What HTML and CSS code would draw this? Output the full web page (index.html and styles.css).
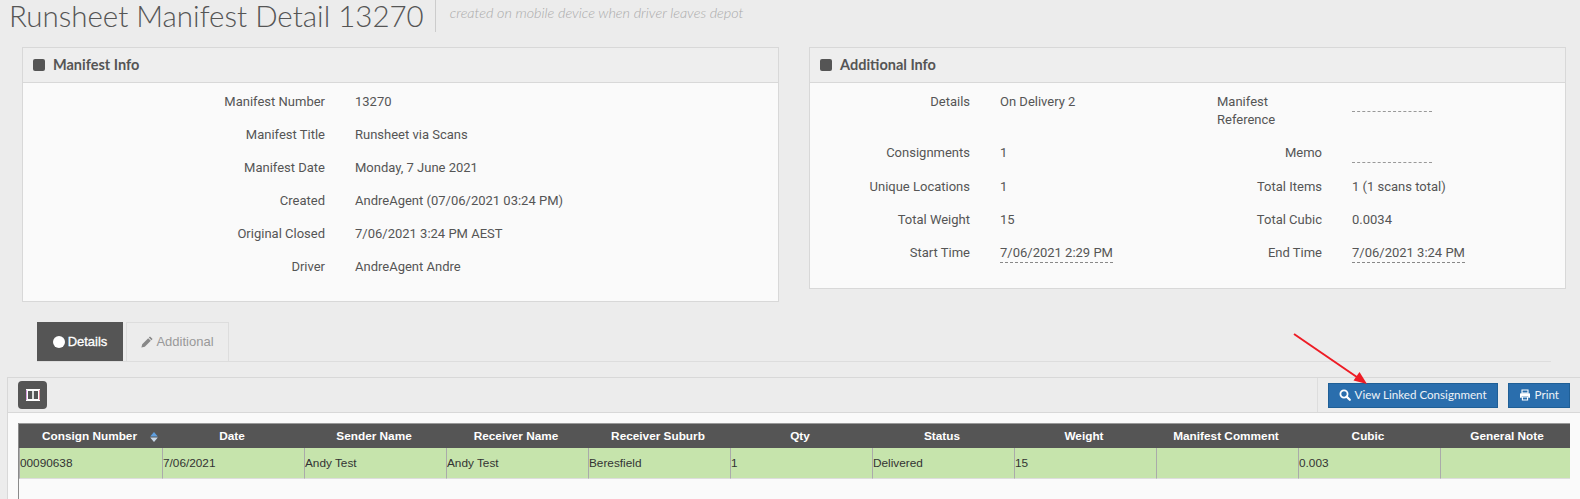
FILE: index.html
```html
<!DOCTYPE html>
<html lang="en">
<head>
<meta charset="utf-8">
<title>Runsheet Manifest Detail 13270</title>
<link rel="stylesheet" href="styles.css">
</head>
<body>
<header class="page-head">
  <h1 class="page-title">Runsheet Manifest Detail 13270</h1>
  <p class="page-sub">created on mobile device when driver leaves depot</p>
</header>

<div class="panels">
  <section class="panel panel-left">
    <h2 class="panel-head"><span class="panel-icon"></span>Manifest Info</h2>
    <div class="panel-body info-one">
      <span class="lab">Manifest Number</span><span class="val">13270</span>
      <span class="lab">Manifest Title</span><span class="val">Runsheet via Scans</span>
      <span class="lab">Manifest Date</span><span class="val">Monday, 7 June 2021</span>
      <span class="lab">Created</span><span class="val">AndreAgent (07/06/2021 03:24 PM)</span>
      <span class="lab">Original Closed</span><span class="val">7/06/2021 3:24 PM AEST</span>
      <span class="lab">Driver</span><span class="val">AndreAgent Andre</span>
    </div>
  </section>
  <section class="panel panel-right">
    <h2 class="panel-head"><span class="panel-icon"></span>Additional Info</h2>
    <div class="panel-body info-two">
      <span class="lab">Details</span><span class="val">On Delivery 2</span>
      <span class="lab lab-left">Manifest Reference</span><span class="val"><span class="dash-empty"></span></span>
      <span class="lab">Consignments</span><span class="val">1</span>
      <span class="lab">Memo</span><span class="val"><span class="dash-empty"></span></span>
      <span class="lab">Unique Locations</span><span class="val">1</span>
      <span class="lab">Total Items</span><span class="val">1 (1 scans total)</span>
      <span class="lab">Total Weight</span><span class="val">15</span>
      <span class="lab">Total Cubic</span><span class="val">0.0034</span>
      <span class="lab">Start Time</span><span class="val"><span class="dash">7/06/2021 2:29 PM</span></span>
      <span class="lab">End Time</span><span class="val"><span class="dash">7/06/2021 3:24 PM</span></span>
    </div>
  </section>
</div>

<nav class="tabs">
  <a class="tab tab-active"><span class="tab-dot"></span>Details</a>
  <a class="tab"><svg class="tab-pencil" viewBox="0 0 12 12"><path d="M9 .4l2.600 2.600-1.200 1.200-2.600-2.600zM7.200 2.200l2.600 2.600-6 6L.4 11.600l.8-3.400z" fill="#888"/></svg>Additional</a>
</nav>

<div class="toolbar">
  <button class="col-btn" aria-label="Columns"><svg viewBox="0 0 14 12" class="col-icon"><rect x="1" y="1" width="12" height="10" fill="none" stroke="#fff" stroke-width="2"/><path d="M7 1v10" stroke="#fff" stroke-width="1.6"/><path d="M0.5 1v10" stroke="#d8a0e0" stroke-width="1"/><path d="M13.5 1v10" stroke="#e090a0" stroke-width="1"/></svg></button>
  <div class="toolbar-right">
    <button class="btn"><svg class="btn-icon" viewBox="0 0 12 12"><circle cx="5" cy="5" r="3.6" fill="none" stroke="#fff" stroke-width="1.8"/><path d="M7.6 7.6l3.2 3.2" stroke="#fff" stroke-width="2.2" stroke-linecap="round"/></svg>View Linked Consignment</button>
    <button class="btn"><svg class="btn-icon" viewBox="0 0 12 12"><path d="M3 1h6v3H3z" fill="none" stroke="#fff" stroke-width="1.1"/><path d="M1 5.3c0-.7.4-1 1-1h8c.6 0 1 .3 1 1v3.4H9.2V7.2H2.8v1.5H1z" fill="#fff"/><path d="M3.4 8h5.2v3H3.4z" fill="none" stroke="#fff" stroke-width="1.1"/></svg>Print</button>
  </div>
</div>

<div class="grid-area">
  <div class="grid-clip">
    <table class="grid">
      <thead>
        <tr>
          <th class="th-sorted">Consign Number<svg class="sort" viewBox="0 0 8 10"><path d="M4 0l3.800 4.500H.2z" fill="#5f9fe0"/><path d="M4 10L.2 5.500h7.600z" fill="#c9d8e8"/></svg></th>
          <th>Date</th><th>Sender Name</th><th>Receiver Name</th><th>Receiver Suburb</th><th>Qty</th><th>Status</th><th>Weight</th><th>Manifest Comment</th><th>Cubic</th><th class="th-last">General Note</th>
        </tr>
      </thead>
      <tbody>
        <tr>
          <td>00090638</td><td>7/06/2021</td><td>Andy Test</td><td>Andy Test</td><td>Beresfield</td><td>1</td><td>Delivered</td><td>15</td><td></td><td>0.003</td><td></td>
        </tr>
      </tbody>
    </table>
  </div>
</div>

<svg class="arrow" viewBox="0 0 80 56" aria-hidden="true"><path d="M1 1L66 45.500" stroke="#ee1c25" stroke-width="2"/><path d="M74 51L60.500 47.500 66.500 39z" fill="#ee1c25"/></svg>
</body>
</html>
```

FILE: styles.css
```css
* { box-sizing: border-box; }
html, body { height: 499px; overflow: hidden; }
body {
  margin: 0;
  background: #ececec;
  color: #555;
  font: 13px/18px Roboto, "Liberation Sans", sans-serif;
  position: relative;
}
.page-head {
  display: flex;
  height: 47px;
  padding-left: 9px;
  align-items: flex-start;
}
.page-title {
  margin: 0;
  height: 32px;
  padding-right: 11px;
  border-right: 1px solid #ccc;
  font: 300 29.5px/32px Lato, sans-serif;
  color: #555;
  white-space: nowrap;
}
.page-sub {
  margin: 4px 0 0 14px;
  font: italic 300 14.4px/18px Lato, sans-serif;
  color: #aaa;
}
.panels {
  display: flex;
  align-items: flex-start;
  gap: 30px;
  padding-left: 22px;
}
.panel {
  border: 1px solid #d8d8d8;
  background: #fafafa;
}
.panel-left { width: 757px; height: 255px; }
.panel-right { width: 757px; height: 242px; }
.panel-head {
  display: flex;
  align-items: center;
  gap: 8px;
  height: 35px;
  margin: 0;
  padding-left: 10px;
  background: #eee;
  border-bottom: 1px solid #d8d8d8;
  font: 700 14.5px/18px Lato, sans-serif;
  color: #555;
}
.panel-icon {
  width: 12px;
  height: 12px;
  border-radius: 2px;
  background: #555;
}
.panel-body {
  display: grid;
  padding-top: 10px;
  row-gap: 15px;
  align-items: start;
}
.info-one { grid-template-columns: 302px 1fr; column-gap: 30px; }
.info-two { grid-template-columns: 160px 187px 105px 1fr; column-gap: 30px; row-gap: 15px; }
.lab { text-align: right; }
.lab-left { text-align: left; }
.dash { display: inline-block; border-bottom: 1px dashed #888; height: 19px; }
.dash-empty { display: block; width: 80px; height: 19px; border-bottom: 1px dashed #999; }
.tabs {
  display: flex;
  gap: 3px;
  margin: 0 29px 0 37px;
  height: 40px;
  position: absolute;
  top: 322px;
  left: 0;
  right: 0;
  border-bottom: 1px solid #ddd;
}
.tab {
  display: flex;
  align-items: center;
  justify-content: center;
  font: 13px/18px "Liberation Sans", sans-serif;
  color: #999;
  border: 1px solid #ddd;
  border-bottom: 0;
  width: 103px;
  gap: 3px;
}
.tab-active {
  width: 86px;
  background: #555;
  border-color: #555;
  color: #fff;
  -webkit-text-stroke: .3px #fff;
}
.tab-dot { width: 12px; height: 12px; border-radius: 50%; background: #fff; }
.tab-pencil { width: 12px; height: 12px; }
.toolbar {
  position: absolute;
  top: 377px;
  left: 7px;
  right: 0;
  height: 36px;
  display: flex;
  justify-content: space-between;
  align-items: stretch;
  border-top: 1px solid #d8d8d8;
  border-bottom: 1px solid #d8d8d8;
  border-left: 1px solid #d8d8d8;
  padding-left: 10px;
}
.col-btn {
  align-self: center;
  display: flex;
  align-items: center;
  justify-content: center;
  width: 29px;
  height: 28px;
  padding: 0;
  border: 0;
  border-radius: 4px;
  background: #555;
}
.col-icon { width: 14px; height: 12px; }
.toolbar-right {
  display: flex;
  align-items: center;
  gap: 10px;
  border-left: 1px solid #ddd;
  padding: 0 10px 0 10px;
}
.btn {
  display: flex;
  align-items: center;
  gap: 4px;
  height: 25px;
  padding: 0 10px;
  border: 1px solid #1f5f96;
  border-radius: 0;
  background: #2a6ead;
  color: #eef3f8;
  font: 11.6px/18px Lato, sans-serif;
  white-space: nowrap;
}
.btn-icon { width: 12px; height: 12px; }
.grid-area {
  position: absolute;
  top: 413px;
  left: 7px;
  right: 0;
  bottom: 0;
  background: #fafafa;
  border-left: 1px solid #d8d8d8;
  padding: 10px 10px 0 10px;
}
.grid-clip {
  height: 100%;
  overflow: hidden;
  border-left: 1px solid #8a8a8a;
}
.grid {
  border-collapse: separate;
  border-spacing: 0;
  table-layout: fixed;
  width: 1557px;
  font: 11.8px/15px "Liberation Sans", sans-serif;
}
.grid th {
  height: 25px;
  width: 142px;
  padding: 0 2px 0 0;
  background: #555;
  border-top: 1px solid #999;
  color: #fff;
  font-weight: 700;
  white-space: nowrap;
}
.grid .th-sorted { position: relative; width: 143px; }
.grid .th-last { width: 136px; }
.grid td {
  height: 31px;
  padding: 0;
  background: #c6e4ac;
  color: #333;
  border-left: 1px solid #aaa;
  border-bottom: 1px solid #ddd;
}
.sort { position: absolute; left: 131px; top: 8px; width: 8px; height: 10px; }
.arrow {
  position: absolute;
  left: 1293px;
  top: 333px;
  width: 80px;
  height: 56px;
}
```
